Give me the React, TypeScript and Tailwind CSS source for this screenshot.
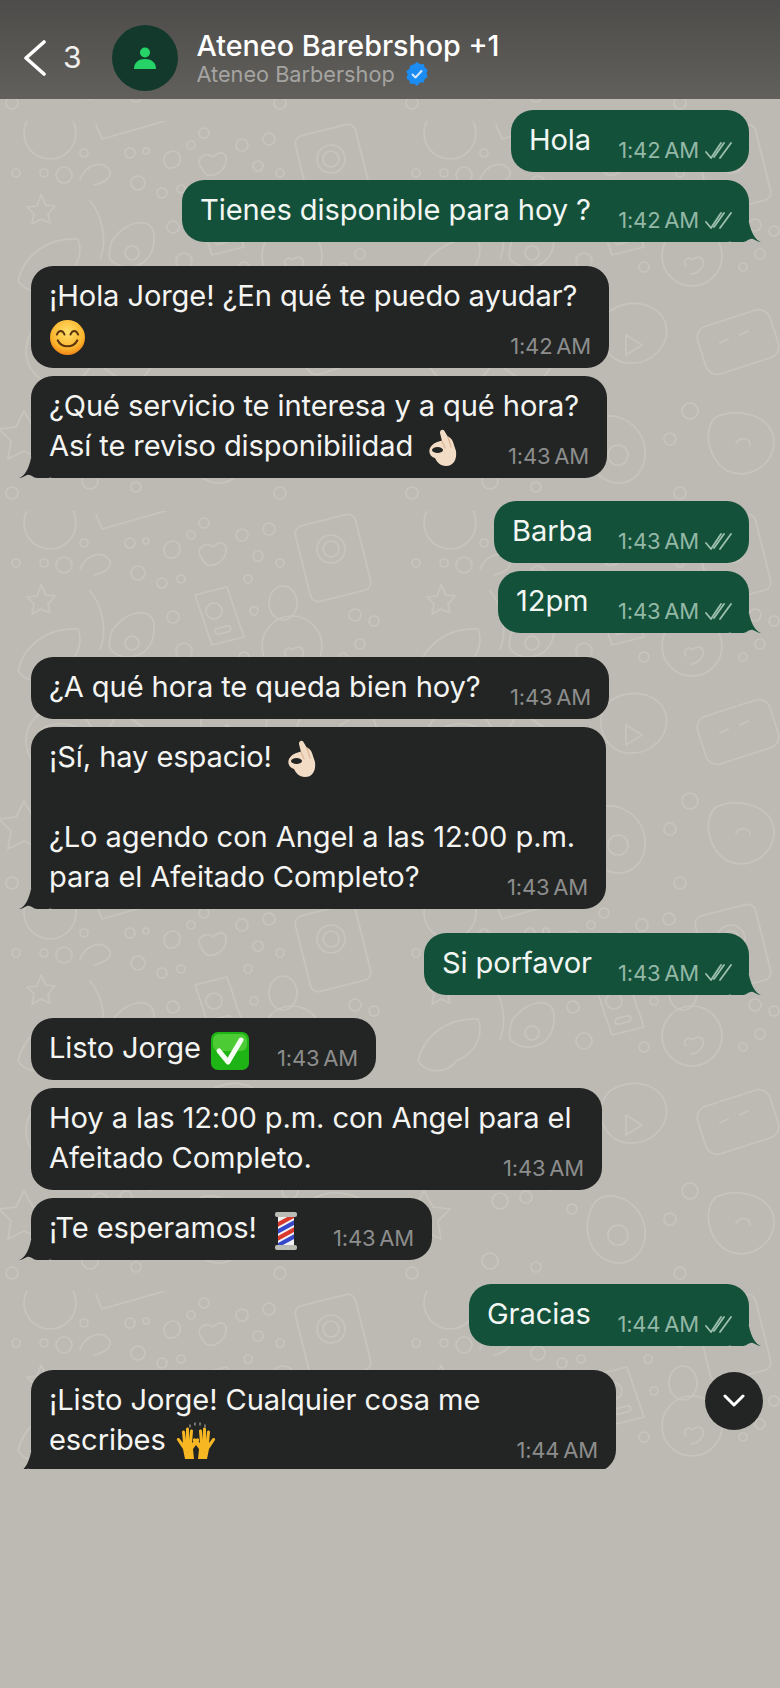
import type { ReactNode } from "react";

function Doodles() {
  return (
    <svg className="absolute inset-0 h-full w-full blur-[0.5px]" aria-hidden="true">
      <defs>
        <pattern id="doodle" x="0" y="22" width="400" height="390" patternUnits="userSpaceOnUse">
          <g fill="none" stroke="#c7c4bd" strokeWidth="1.7" strokeLinecap="round" strokeLinejoin="round">
            {/* phone */}
            <rect x="302" y="8" width="62" height="78" rx="8" transform="rotate(-14 333 47)" />
            <circle cx="331" cy="38" r="14" />
            <circle cx="331" cy="38" r="8" />
            {/* heart */}
            <path d="M201 46c-6-8 4-16 12-10 6-6 14-6 13 4-1 10-12 16-18 14-3-1-5-4-7-8z" />
            <path d="M164 36c5-8 14-8 16 0 1 7-4 12-11 11-5-1-5-7-5-11z" />
            {/* star */}
            <path d="M41 74l5 10 9 1-7 8 2 9-9-4-9 5 2-10-7-7 10-1z" />
            {/* note */}
            <path d="M195 84l32-8 17 50-32 8z" />
            <circle cx="214" cy="100" r="8" />
            <rect x="215" y="116" width="16" height="6" rx="3" transform="rotate(-15 223 119)" />
            {/* blob */}
            <ellipse cx="283" cy="92" rx="14" ry="17" />
            <circle cx="292" cy="135" r="30" />
            <path d="M286 145c-4-7 3-10 7-6 4-5 12-3 10 5-2 6-8 9-12 9" />
            {/* bird */}
            <path d="M18 160c6-26 30-44 60-42 6 16-2 34-22 42-8 12-28 14-38 0z" />
            <path d="M90 80c12 14 18 40 10 58" />
            <path d="M112 120c14-22 44-26 42-2 0 28-30 36-44 20-2-6 0-12 2-18z" />
            <circle cx="132" cy="132" r="7" />
            <path d="M80 58c6-14 22-20 30-8 2 8-8 12-16 14" />
            {/* outline top */}
            <circle cx="50" cy="12" r="26" />
            <path d="M96 4l6 14 70-20" />
            {/* small rings */}
            <circle cx="64" cy="54" r="8" /><circle cx="138" cy="62" r="7" />
            <circle cx="16" cy="52" r="4" /><circle cx="44" cy="52" r="4" />
            <circle cx="84" cy="32" r="4" /><circle cx="130" cy="32" r="5" />
            <circle cx="146" cy="30" r="3" /><circle cx="162" cy="72" r="5" />
            <circle cx="181" cy="68" r="4" /><circle cx="248" cy="68" r="4" />
            <circle cx="258" cy="45" r="5" /><circle cx="280" cy="52" r="4" />
            <circle cx="254" cy="100" r="4" /><circle cx="355" cy="104" r="6" />
            <circle cx="374" cy="110" r="5" /><circle cx="360" cy="133" r="5" />
            <circle cx="343" cy="146" r="4" /><circle cx="173" cy="106" r="6" />
            <circle cx="184" cy="140" r="8" /><circle cx="244" cy="146" r="5" />
            <circle cx="204" cy="12" r="5" /><circle cx="242" cy="24" r="6" />
            <circle cx="269" cy="18" r="6" /><circle cx="191" cy="24" r="4" />
            {/* lower half */}
            <circle cx="60" cy="230" r="34" />
            <path d="M40 220c8-10 40-10 44 4" />
            <path d="M120 200l44 30-30 38-40-28z" />
            <path d="M132 230l16 10" />
            <path d="M210 190c20-14 50-8 56 14 4 20-14 40-38 38-26-2-36-36-18-52z" />
            <path d="M226 214l16 10-16 10z" />
            <rect x="300" y="196" width="76" height="50" rx="12" transform="rotate(-18 338 221)" />
            <path d="M320 222l8-4M340 214l8-4" />
            <path d="M24 290l9 16 17 2-12 12 3 18-17-8-16 8 3-18-12-12 17-2z" />
            <circle cx="100" cy="300" r="8" /><circle cx="126" cy="296" r="6" />
            <circle cx="150" cy="282" r="7" /><circle cx="172" cy="308" r="5" />
            <path d="M196 300c-16 20-10 58 20 62 26 2 38-30 22-52-10-14-30-20-42-10z" />
            <circle cx="218" cy="334" r="10" />
            <circle cx="290" cy="290" r="8" /><circle cx="270" cy="318" r="6" />
            <path d="M316 296c22-10 54-2 58 22 2 24-24 42-46 32-20-10-26-42-12-54z" />
            <path d="M336 322c4-6 14-6 14 2" />
            <circle cx="12" cy="372" r="6" /><circle cx="90" cy="360" r="8" />
            <circle cx="136" cy="366" r="5" /><circle cx="280" cy="372" r="6" />
          </g>
        </pattern>
      </defs>
      <rect width="100%" height="100%" fill="url(#doodle)" />
    </svg>
  );
}

function Smile() {
  return (
    <svg viewBox="0 0 36 36" className="-my-[10px] ml-[1px] inline-block h-[35px] w-[35px] align-middle">
      <defs>
        <radialGradient id="smileFace" cx="50%" cy="35%" r="70%">
          <stop offset="0" stopColor="#ffdf6a" />
          <stop offset="0.65" stopColor="#fbb62e" />
          <stop offset="1" stopColor="#ee7a12" />
        </radialGradient>
      </defs>
      <circle cx="18" cy="18" r="18" fill="url(#smileFace)" />
      <path d="M7 15c2-5 6-5 8 0M21 15c2-5 6-5 8 0" fill="none" stroke="#5b3510" strokeWidth="2" strokeLinecap="round" />
      <path d="M8 21c4 8 16 8 20 0" fill="none" stroke="#5b3510" strokeWidth="2.2" strokeLinecap="round" />
    </svg>
  );
}

function OkHand() {
  return (
    <svg viewBox="0 0 29 38" className="-my-[10px] ml-[15px] inline-block h-[38px] w-[29px] align-middle">
      <path
        d="M2 19C5 14 10 12 14 12L12 4C12 0 16 0 17 3L20 8C22 8 24 10 25 13L28 22C29 30 26 37 18 37 12 37 9 33 7 29 3 28 0 24 2 19Z"
        fill="#f3dcc5"
      />
      <path d="M14 12l3 7M20 8l3 10" fill="none" stroke="#dfbb9c" strokeWidth="1.4" strokeLinecap="round" />
      <ellipse cx="9.5" cy="21" rx="5.5" ry="3" fill="#232524" />
    </svg>
  );
}

function CheckBox() {
  return (
    <svg viewBox="0 0 38 38" className="-my-[10px] ml-[10px] inline-block h-[38px] w-[38px] align-middle">
      <rect width="38" height="38" rx="7" fill="#1fb416" />
      <rect x="2" y="2" width="34" height="17" rx="6" fill="#4ccb35" />
      <path d="M8 19l9 11L30 8" fill="none" stroke="#f6fff3" strokeWidth="5" strokeLinecap="round" strokeLinejoin="round" />
    </svg>
  );
}

function BarberPole() {
  return (
    <svg viewBox="0 0 26 38" className="-my-[10px] ml-[16px] inline-block h-[38px] w-[26px] align-middle">
      <defs>
        <clipPath id="poleClip">
          <rect x="5" y="4" width="16" height="30" />
        </clipPath>
      </defs>
      <rect x="5" y="4" width="16" height="30" fill="#f2f2f2" />
      <g clipPath="url(#poleClip)" fill="none" strokeWidth="4">
        <path d="M2 14L24 2M2 28l22-12" stroke="#d8392c" />
        <path d="M2 21L24 9M2 35l22-12" stroke="#3548c9" />
      </g>
      <rect x="2" y="0" width="22" height="5" rx="2" fill="#bcbcb6" />
      <rect x="2" y="33" width="22" height="5" rx="2" fill="#bcbcb6" />
    </svg>
  );
}

function Hands() {
  return (
    <svg viewBox="0 0 40 40" className="-my-[10px] ml-[10px] inline-block h-[40px] w-[40px] align-middle">
      <g fill="#f7b723">
        <path d="M18 37H9l-2-10-6-9c-1-2 2-3 3-1l3 4-1-11c0-2 3-2 3 0l1 8V7c0-2 3-2 3 0v11l1-9c0-2 3-2 3 0l-1 12 4-4c2-2 4 0 3 2l-6 8z" />
        <path d="M22 37h9l2-10 6-9c1-2-2-3-3-1l-3 4 1-11c0-2-3-2-3 0l-1 8V7c0-2-3-2-3 0v11l-1-9c0-2-3-2-3 0l1 12-4-4c-2-2-4 0-3 2l6 8z" />
      </g>
      <path d="M14 3v2M19 1v2M24 1v2M29 3v2" stroke="#8d8a80" strokeWidth="1.5" strokeLinecap="round" />
    </svg>
  );
}

function Ticks() {
  return (
    <svg viewBox="0 0 27 17" className="-mr-[1px] ml-[6px] h-[17px] w-[27px]" fill="none" stroke="#9dc0ae" strokeWidth="1.8" strokeLinecap="round" strokeLinejoin="round">
      <path d="M1 10l5 6L16 1" />
      <path d="M9 15L19 1" />
      <path d="M15 16L26 1" />
    </svg>
  );
}

type BubbleProps = {
  out?: boolean;
  tail?: boolean;
  time: string;
  width: string;
  children: ReactNode;
};

function Bubble({ out, tail, time, width, children }: BubbleProps) {
  return (
    <div
      className={`relative grid rounded-[22px] px-[18px] py-[11px] ${width} ${
        out ? "self-end bg-[#14513b] text-[#f2f7f3]" : "self-start bg-[#232524] text-[#f4f4f2]"
      }`}
    >
      <div className="col-start-1 row-start-1 -mt-[1px] mb-[1px] whitespace-pre text-[29.1px] leading-[40px] tracking-[-0.1px]">
        {children}
      </div>
      <div
        className={`col-start-1 row-start-1 -mb-[2px] flex items-center self-end justify-self-end text-[22px] leading-[26px] tracking-[-0.2px] [word-spacing:-2px] ${
          out ? "text-[#93b8a6]" : "text-[#8c8d8c]"
        }`}
      >
        {time}
        {out && <Ticks />}
      </div>
      {tail && (
        <svg
          viewBox="0 0 30 20"
          className={`absolute bottom-0 h-[20px] w-[30px] ${out ? "right-[-12px] -scale-x-100" : "left-[-12px]"}`}
        >
          <path d="M0 20C6 18 10 10 12 0H30V20H18C14 20 12 16 8 17 5 18 3 20 0 20Z" fill={out ? "#14513b" : "#232524"} />
        </svg>
      )}
    </div>
  );
}

export default function App() {
  return (
    <div className="min-h-[1688px] bg-[#bdbab3] font-['Inter','Liberation_Sans',sans-serif]">
      <header className="flex h-[99px] items-center bg-gradient-to-b from-[#4d4c4a] to-[#61605c] pl-[24px] pt-[16px]">
        <svg viewBox="0 0 22 36" className="h-[36px] w-[22px]" fill="none" stroke="#fff" strokeWidth="3.6" strokeLinecap="round" strokeLinejoin="round">
          <path d="M20 2L2 18l18 16" />
        </svg>
        <span className="ml-[17px] text-[30px] font-normal text-[#f0f0ee]">3</span>
        <div className="ml-[30px] flex h-[66px] w-[66px] items-center justify-center rounded-full bg-[#12392c]">
          <svg viewBox="0 0 24 24" className="h-[24px] w-[24px]" fill="#25d366">
            <circle cx="12" cy="6.5" r="5" />
            <path d="M1 23c0-7 5-10 11-10s11 3 11 10z" />
          </svg>
        </div>
        <div className="ml-[19px] flex flex-col">
          <div className="mt-[2px] text-[28.7px] font-medium leading-[34px] text-white">Ateneo Barebrshop +1</div>
          <div className="-mt-[3px] flex items-center text-[21.7px] leading-[28px] text-[#a5a4a1]">
            Ateneo Barbershop
            <svg viewBox="0 0 24 24" className="ml-[10px] h-[24px] w-[24px]">
              <path
                d="M12 0l3 2.2 3.7-.2 1 3.6 3 2.2-1.3 3.5 1.3 3.5-3 2.2-1 3.6-3.7-.2L12 24l-3-2.2-3.7.2-1-3.6-3-2.2 1.3-3.5L1.3 9.3l3-2.2 1-3.6L9 2.2z"
                fill="#1b8cf2"
              />
              <path d="M7.5 12.5l3 3 6-6.5" fill="none" stroke="#d5e8fa" strokeWidth="2" strokeLinecap="round" strokeLinejoin="round" />
            </svg>
          </div>
        </div>
      </header>

      <main className="relative h-[1370px] overflow-hidden">
        <Doodles />
        <div className="relative flex flex-col gap-[23.7px] px-[31px] pt-[11px]">
          <div className="flex flex-col gap-[8px]">
            <Bubble out time="1:42 AM" width="w-[238px]">Hola</Bubble>
            <Bubble out tail time="1:42 AM" width="w-[567px]">Tienes disponible para hoy ?</Bubble>
          </div>
          <div className="flex flex-col gap-[8px]">
            <Bubble time="1:42 AM" width="w-[578px]">
              ¡Hola Jorge! ¿En qué te puedo ayudar?
              <br />
              <Smile />
            </Bubble>
            <Bubble tail time="1:43 AM" width="w-[576px]">
              ¿Qué servicio te interesa y a qué hora?
              <br />
              Así te reviso disponibilidad
              <OkHand />
            </Bubble>
          </div>
          <div className="flex flex-col gap-[8px]">
            <Bubble out time="1:43 AM" width="w-[255px]">Barba</Bubble>
            <Bubble out tail time="1:43 AM" width="w-[251px]">12pm</Bubble>
          </div>
          <div className="flex flex-col gap-[8px]">
            <Bubble time="1:43 AM" width="w-[578px]">¿A qué hora te queda bien hoy?</Bubble>
            <Bubble tail time="1:43 AM" width="w-[575px]">
              ¡Sí, hay espacio!
              <OkHand />
              <br />
              <br />
              ¿Lo agendo con Angel a las 12:00 p.m.
              <br />
              para el Afeitado Completo?
            </Bubble>
          </div>
          <Bubble out tail time="1:43 AM" width="w-[325px]">Si porfavor</Bubble>
          <div className="flex flex-col gap-[8px]">
            <Bubble time="1:43 AM" width="w-[345px]">
              Listo Jorge
              <CheckBox />
            </Bubble>
            <Bubble time="1:43 AM" width="w-[571px]">
              Hoy a las 12:00 p.m. con Angel para el
              <br />
              Afeitado Completo.
            </Bubble>
            <Bubble tail time="1:43 AM" width="w-[401px]">
              ¡Te esperamos!
              <BarberPole />
            </Bubble>
          </div>
          <Bubble out tail time="1:44 AM" width="w-[280px]">Gracias</Bubble>
          <Bubble tail time="1:44 AM" width="w-[585px]">
            ¡Listo Jorge! Cualquier cosa me
            <br />
            escribes
            <Hands />
          </Bubble>
        </div>
        <button className="absolute left-[705px] top-[1273px] flex h-[58px] w-[58px] items-center justify-center rounded-full bg-[#232524]">
          <svg viewBox="0 0 22 14" className="h-[14px] w-[22px]" fill="none" stroke="#fff" strokeWidth="3" strokeLinecap="round" strokeLinejoin="round">
            <path d="M2 2l9 9 9-9" />
          </svg>
        </button>
      </main>
    </div>
  );
}
